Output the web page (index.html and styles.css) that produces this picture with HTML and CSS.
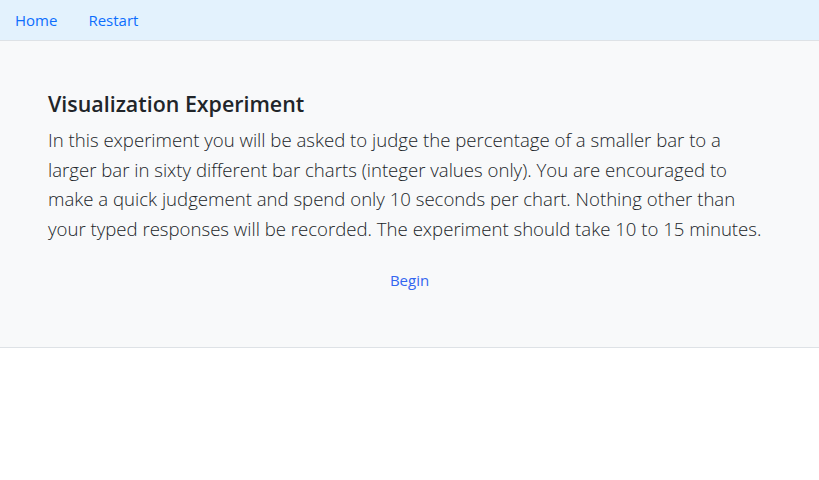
FILE: index.html
```html
<!DOCTYPE html>
<html lang="en">
<head>
<meta charset="utf-8">
<title>Visualization Experiment</title>
<link rel="stylesheet" href="styles.css">
</head>
<body>
<nav class="navbar">
  <a class="nav-link" href="#">Home</a>
  <a class="nav-link" href="#">Restart</a>
</nav>
<section class="intro">
  <h1 class="title">Visualization Experiment</h1>
  <p class="lead">In this experiment you will be asked to judge the percentage of a smaller bar to a larger bar in sixty different bar charts (integer values only). You are encouraged to make a quick judgement and spend only 10 seconds per chart. Nothing other than your typed responses will be recorded. The experiment should take 10 to 15 minutes.</p>
  <div class="actions"><a class="begin" href="#">Begin</a></div>
</section>
</body>
</html>
```
FILE: styles.css
```css
* { box-sizing: border-box; }
body {
  margin: 0;
  font-family: "Open Sans", "Noto Sans", sans-serif;
  color: #212529;
  background: #fff;
}
.navbar {
  display: flex;
  align-items: center;
  height: 41px;
  background: #e3f2fd;
  border-bottom: 1px solid #dee2e6;
}
.nav-link {
  padding: 0 16px 0 15px;
  font-size: 15px;
  color: #0d6efd;
  text-decoration: none;
  line-height: 24px;
}
.nav-link + .nav-link { padding-left: 15px; }
.intro {
  background: #f8f9fa;
  border-bottom: 1px solid #dee2e6;
  padding: 51px 48px 0;
  height: 307px;
}
.title {
  margin: 0 0 9px;
  font-size: 21.4px;
  font-weight: 600;
  line-height: 24px;
}
.lead {
  margin: 0;
  font-size: 18.6px;
  font-weight: 300;
  line-height: 29.7px;
  color: #212529;
}
.actions {
  text-align: center;
  margin-top: 24px;
}
.begin {
  font-size: 15px;
  line-height: 24px;
  color: #3366f0;
  text-decoration: none;
}
```
